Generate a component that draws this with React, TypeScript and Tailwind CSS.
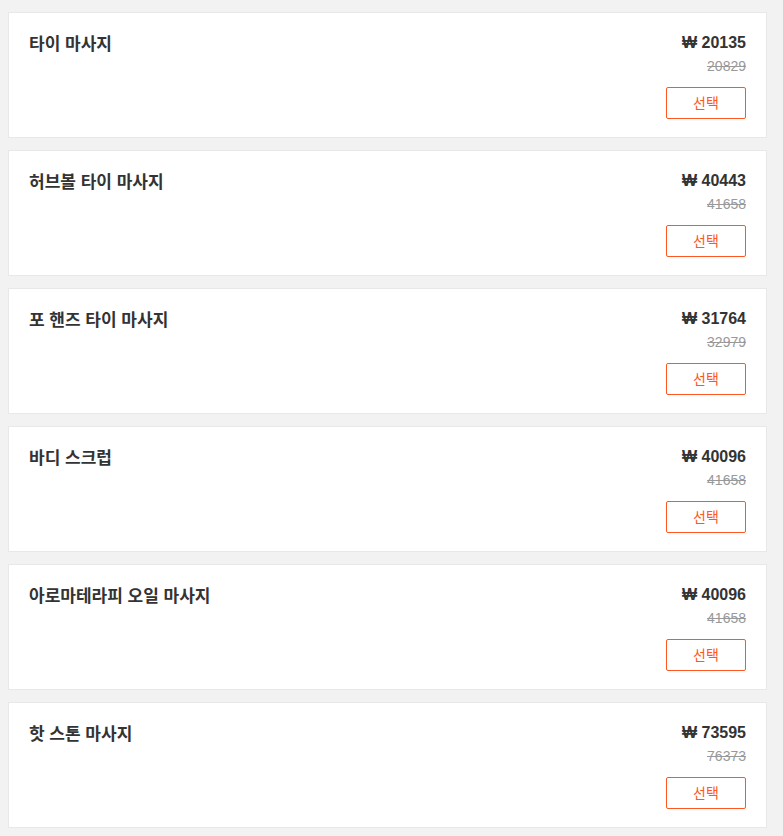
const items = [
  { id: 1, name: '타이 마사지', price: 20135, original: 20829 },
  { id: 2, name: '허브볼 타이 마사지', price: 40443, original: 41658 },
  { id: 3, name: '포 핸즈 타이 마사지', price: 31764, original: 32979 },
  { id: 4, name: '바디 스크럽', price: 40096, original: 41658 },
  { id: 5, name: '아로마테라피 오일 마사지', price: 40096, original: 41658 },
  { id: 6, name: '핫 스톤 마사지', price: 73595, original: 76373 },
];

export default function App() {
  return (
    <div
      className="min-h-[836px] w-[783px] bg-[#f2f2f2] pt-3 pb-2 pl-2"
      style={{ fontFamily: '"Liberation Sans", "Noto Sans CJK KR", sans-serif' }}
    >
      <div className="flex w-[759px] flex-col gap-3">
        {items.map((item) => (
          <div
            key={item.id}
            className="flex h-[126px] justify-between border border-[#e8e8e8] bg-white px-5 pt-5 pb-[18px]"
          >
            {/* Name */}
            <p className="text-[17px] leading-6 font-semibold text-[#333]">{item.name}</p>

            {/* Price + select */}
            <div className="flex flex-col items-end">
              <span className="text-base leading-5 font-bold text-[#333]">₩ {item.price}</span>
              <span className="mt-1 text-sm leading-[18px] text-[#999] line-through">{item.original}</span>
              <button className="mt-3 h-8 w-20 rounded-[2px] border border-[#ff5722] bg-white text-sm text-[#ff5722]">
                선택
              </button>
            </div>
          </div>
        ))}
      </div>
    </div>
  );
}
